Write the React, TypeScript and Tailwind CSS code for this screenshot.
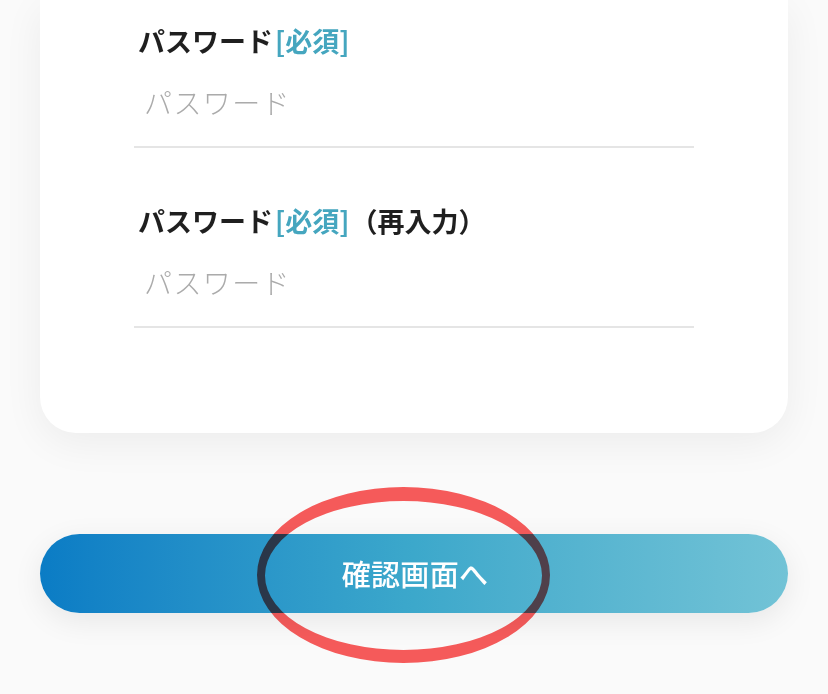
import React from 'react';

const FONT = "font-['Noto_Sans_CJK_JP','Noto_Sans',sans-serif]";

const PasswordField: React.FC<{ suffix?: string }> = ({ suffix }) => (
  <div className="flex flex-col">
    <label className="pl-1 h-[30px] flex items-center text-[27px] font-bold leading-none text-[#1f1f1f]">
      <span>パスワード</span>
      <span className="text-[#45a6bf] ml-[2px]">[必須]</span>
      {suffix && <span className="ml-[1px]">{suffix}</span>}
    </label>
    <input
      type="password"
      placeholder="パスワード"
      className="mt-[3px] h-[90px] pl-[10px] border-b-2 border-[#e5e5e5] bg-transparent text-[28px] font-light tracking-[0.05em] text-[#333] placeholder:text-[#ababab] outline-none"
    />
  </div>
);

export default function App() {
  return (
    <div className={`relative min-h-[694px] bg-[#fafafa] px-[40px] overflow-hidden ${FONT}`}>
      <div className="bg-white rounded-b-[36px] shadow-[0_10px_40px_rgba(0,0,0,0.06)] px-[94px] pt-[25px] pb-[105px] flex flex-col gap-[57px]">
        <PasswordField />
        <PasswordField suffix="（再入力）" />
      </div>

      <button className="mt-[101px] w-full h-[79px] rounded-full bg-gradient-to-r from-[#0a7cc5] via-[#3ca8cb] to-[#72c3d6] shadow-[0_8px_30px_rgba(0,0,0,0.08)] text-white text-[29px] font-medium tracking-[0.01em] flex items-center justify-center pl-[2px]">
        確認画面へ
      </button>

      {/* red marker annotation */}
      <svg
        className="absolute left-0 top-0 pointer-events-none mix-blend-multiply"
        width="828"
        height="694"
        viewBox="0 0 828 694"
      >
        <path
          fillRule="evenodd"
          fill="#fa5c5c"
          d="M257 575a146.5 88 0 1 0 293 0a146.5 88 0 1 0 -293 0Z M265 575.5a138.5 74.5 0 1 0 277 0a138.5 74.5 0 1 0 -277 0Z"
        />
      </svg>
    </div>
  );
}
